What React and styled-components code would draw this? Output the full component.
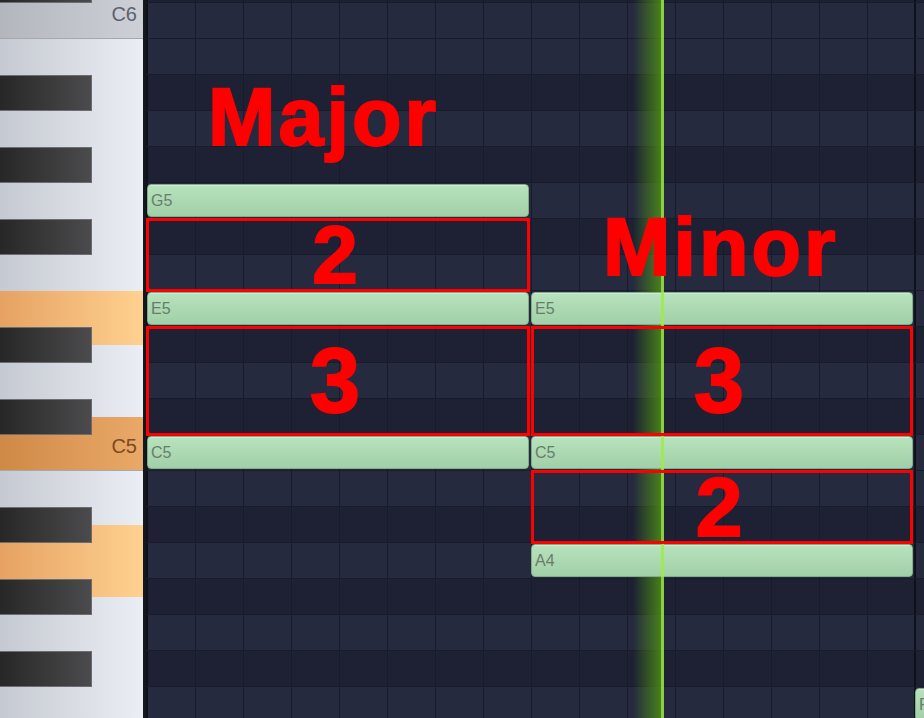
import React from 'react';
import styled, { createGlobalStyle } from 'styled-components';

const GlobalStyle = createGlobalStyle`
  html, body {
    margin: 0;
    padding: 0;
    background: #1d2133;
    overflow: hidden;
  }
  #root {
    width: 924px;
    height: 718px;
  }
`;

const ROW = 36;
const ROW_TOP = -33; // C#6 starts above the window
const COL = 48;

// top to bottom, C#6 .. F4
const ROWS = ['C#6', 'C6', 'B5', 'A#5', 'A5', 'G#5', 'G5', 'F#5', 'F5', 'E5', 'D#5', 'D5', 'C#5', 'C5', 'B4', 'A#4', 'A4', 'G#4', 'G4', 'F#4', 'F4'];
const rowOf = (name) => ROWS.indexOf(name) + 1;
const isBlack = (name) => name.includes('#');

const WHITE_KEYS = [
  { name: 'C6', h: 54, label: 'C6' },
  { name: 'B5', h: 54 },
  { name: 'A5', h: 72 },
  { name: 'G5', h: 72 },
  { name: 'F5', h: 54 },
  { name: 'E5', h: 54, lit: true },
  { name: 'D5', h: 72 },
  { name: 'C5', h: 54, label: 'C5', lit: true },
  { name: 'B4', h: 54 },
  { name: 'A4', h: 72, lit: true },
  { name: 'G4', h: 72 },
  { name: 'F4', h: 54 },
];

// col = step where the note starts, 8 steps long
const NOTES = [
  { name: 'G5', col: 0 },
  { name: 'E5', col: 0 },
  { name: 'C5', col: 0 },
  { name: 'E5', col: 8 },
  { name: 'C5', col: 8 },
  { name: 'A4', col: 8 },
  { name: 'F4', col: 16 },
];

// interval boxes: from/to row, which chord
const FRAMES = [
  { from: 'F#5', to: 'F5', col: 0, n: '2', size: 82 },
  { from: 'D#5', to: 'C#5', col: 0, n: '3', size: 90 },
  { from: 'D#5', to: 'C#5', col: 8, n: '3', size: 90 },
  { from: 'B4', to: 'A#4', col: 8, n: '2', size: 84 },
];

const Window = styled.div`
  display: flex;
  width: 924px;
  height: 718px;
  overflow: hidden;
  font-family: "Liberation Sans", Arial, sans-serif;
`;

const Keyboard = styled.div`
  position: relative;
  flex: 0 0 143px;
  overflow: hidden;
  border-right: 3px solid #15171f;
  box-shadow: inset 2px 0 0 #a9adb6;
`;

const WhiteKeys = styled.div`
  display: flex;
  flex-direction: column;
  margin-top: -15px;
`;

const whiteFill = ({ $lit, $c }) => {
  if ($lit && $c) return 'linear-gradient(to right, #cf8947, #eaa968)';
  if ($lit) return 'linear-gradient(to right, #e6a262, #ffd190)';
  if ($c) return 'linear-gradient(to right, #b3b6bd, #cdd0d6)';
  return 'linear-gradient(to right, #c5c9d1, #ebeef5)';
};

const WhiteKey = styled.div`
  height: ${(p) => p.$h}px;
  box-sizing: border-box;
  border-bottom: 1px solid ${(p) => (p.$c ? '#a4a8b1' : 'transparent')};
  background: ${whiteFill};
  display: flex;
  align-items: flex-end;
  justify-content: flex-end;
  padding: 0 6px 14px 0;
`;

const KeyLabel = styled.span`
  font-size: 20px;
  line-height: 20px;
  color: ${(p) => (p.$lit ? '#7d4a22' : '#5d6070')};
`;

const BlackLayer = styled.div`
  position: absolute;
  inset: 0;
  display: flex;
  flex-direction: column;
  margin-top: ${ROW_TOP}px;
  pointer-events: none;
`;

const KeySlot = styled.div`
  height: ${ROW}px;
  flex: 0 0 ${ROW}px;
`;

const BlackKey = styled.div`
  width: 92px;
  height: 100%;
  box-sizing: border-box;
  border: 1px solid #6b6d72;
  border-left: none;
  background: linear-gradient(to right, #272727, #4b4b4d);
`;

const Roll = styled.div`
  position: relative;
  flex: 1;
  overflow: hidden;
  background: #1d2133;
`;

const Sheet = styled.div`
  display: grid;
  grid-template-columns: 1px repeat(17, ${COL}px);
  grid-template-rows: repeat(${ROWS.length}, ${ROW}px);
  margin-top: ${ROW_TOP}px;
`;

const Lane = styled.div`
  grid-column: 1 / -1;
  grid-row: ${(p) => p.$row};
  box-sizing: border-box;
  border-bottom: 1px solid #181b29;
  background-color: ${(p) => (p.$black ? '#1d2133' : '#252a3f')};
  background-image:
    linear-gradient(to right, #0f1119 0 2px, transparent 2px),
    linear-gradient(to right, #181b29 0 1px, transparent 1px);
  background-size: ${COL * 16}px 100%, ${COL}px 100%;
  background-position: 0 0, 1px 0;
`;

const Note = styled.div`
  position: relative;
  z-index: 1;
  grid-row: ${(p) => p.$row};
  grid-column: ${(p) => p.$col + 2} / span 8;
  margin: 1px 2px 2px 0;
  box-sizing: border-box;
  border: 1px solid #82ab89;
  border-radius: 4px;
  background: linear-gradient(to bottom, #b7e2bd, #a1d0a8);
  box-shadow: inset 0 1px 0 rgba(255, 255, 255, 0.35);
  display: flex;
  align-items: center;
  padding-left: 3px;
  font-size: 16px;
  color: #687e6b;
  white-space: nowrap;
  overflow: hidden;
`;

const PlayGlow = styled.div`
  position: absolute;
  z-index: 0;
  top: 0;
  bottom: 0;
  left: ${(p) => p.$x - 28}px;
  width: 28px;
  background: linear-gradient(to right, rgba(80, 150, 20, 0), rgba(80, 150, 20, 0.8));
`;

const PlayLine = styled.div`
  position: absolute;
  z-index: 2;
  top: 0;
  bottom: 0;
  left: ${(p) => p.$x}px;
  width: 3px;
  background: rgba(160, 236, 66, 0.85);
`;

const Frame = styled.div`
  position: relative;
  z-index: 3;
  grid-row: ${(p) => p.$from} / ${(p) => p.$to + 1};
  grid-column: ${(p) => (p.$col === 0 ? '1 / span 9' : `${p.$col + 2} / span 8`)};
  margin: -1px ${(p) => (p.$col === 0 ? 1 : 2)}px -1px 0;
  box-sizing: border-box;
  border: 3px solid #ff0000;
  display: flex;
  align-items: center;
  justify-content: center;
`;

const Interval = styled.span`
  font-size: ${(p) => p.$size}px;
  font-weight: 700;
  line-height: 1;
  color: #ff0000;
  -webkit-text-stroke: 2px #ff0000;
  margin-right: 6px;
`;

const Caption = styled.div`
  position: relative;
  z-index: 4;
  grid-row: ${(p) => p.$row} / span 3;
  grid-column: ${(p) => p.$col} / span 9;
  align-self: start;
  justify-self: start;
  font-size: 81px;
  font-weight: 700;
  line-height: 1;
  letter-spacing: 3px;
  color: #ff0000;
  -webkit-text-stroke: 2px #ff0000;
  white-space: nowrap;
`;

const MajorCaption = styled(Caption)`
  margin: 2px 0 0 62px;
`;

const MinorCaption = styled(Caption)`
  margin: 24px 0 0 72px;
`;

export default function App() {
  return (
    <>
      <GlobalStyle />
      <Window>
        <Keyboard>
          <WhiteKeys>
            {WHITE_KEYS.map((k) => (
              <WhiteKey key={k.name} $h={k.h} $lit={k.lit} $c={!!k.label}>
                {k.label && <KeyLabel $lit={k.lit}>{k.label}</KeyLabel>}
              </WhiteKey>
            ))}
          </WhiteKeys>
          <BlackLayer>
            {ROWS.map((r) => (
              <KeySlot key={r}>{isBlack(r) && <BlackKey />}</KeySlot>
            ))}
          </BlackLayer>
        </Keyboard>

        <Roll>
          <Sheet>
            {ROWS.map((r) => (
              <Lane key={r} $row={rowOf(r)} $black={isBlack(r)} />
            ))}

            {NOTES.map((n, i) => (
              <Note key={i} $col={n.col} $row={rowOf(n.name)}>
                {n.name}
              </Note>
            ))}

            {FRAMES.map((f, i) => (
              <Frame key={i} $from={rowOf(f.from)} $to={rowOf(f.to)} $col={f.col}>
                <Interval $size={f.size}>{f.n}</Interval>
              </Frame>
            ))}

            <MajorCaption $row={rowOf('A#5')} $col={1}>Major</MajorCaption>
            <MinorCaption $row={rowOf('G5')} $col={10}>Minor</MinorCaption>
          </Sheet>

          <PlayGlow $x={515} />
          <PlayLine $x={515} />
        </Roll>
      </Window>
    </>
  );
}
